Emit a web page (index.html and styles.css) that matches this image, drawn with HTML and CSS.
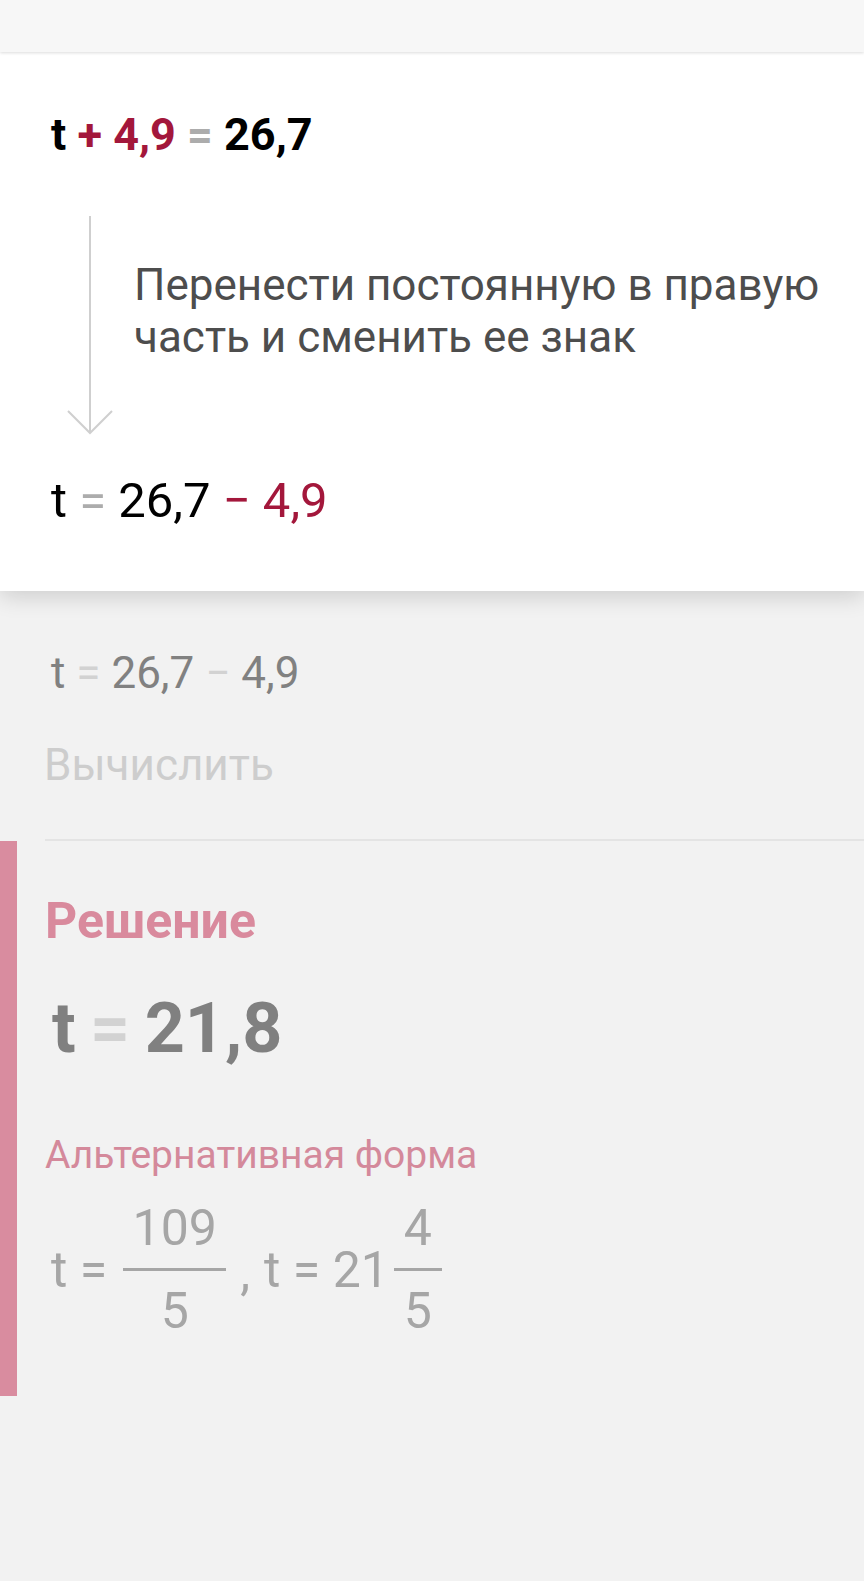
FILE: index.html
```html
<!DOCTYPE html>
<html lang="ru">
<head>
<meta charset="utf-8">
<title>Решение</title>
<link rel="stylesheet" href="styles.css">
</head>
<body>
<div class="topbar"></div>
<section class="card">
  <div class="eq eq-bold"><span>t</span> <span class="red">+ 4,9</span> <span class="eqs">=</span> <span>26,7</span></div>
  <div class="step">
    <svg class="arrow" width="48" height="220" viewBox="0 0 48 220">
      <path d="M24 0 V217 M2 195 L24 217 L46 195" fill="none" stroke="#cfcfcf" stroke-width="2"/>
    </svg>
    <p class="step-text">Перенести постоянную в правую часть и сменить ее знак</p>
  </div>
  <div class="eq eq-reg"><span>t</span> <span class="eqs">=</span> <span>26,7</span> <span class="red">− 4,9</span></div>
</section>
<section class="rest">
  <div class="eq eq-faded"><span>t</span> <span class="eqs-faded">=</span> 26,7 <span class="eqs-faded">−</span> 4,9</div>
  <div class="compute">Вычислить</div>
  <div class="divider"></div>
  <div class="solution">
    <h2 class="sol-title">Решение</h2>
    <div class="sol-answer">t <span class="eqs-faded">=</span> 21,8</div>
    <div class="alt-title">Альтернативная форма</div>
    <div class="alt-row">
      <span class="alt-text">t =</span>
      <span class="frac frac-wide"><span class="num">109</span><span class="bar"></span><span class="den">5</span></span>
      <span class="alt-text comma">,</span>
      <span class="alt-text">t = 21</span>
      <span class="frac frac-narrow"><span class="num">4</span><span class="bar"></span><span class="den">5</span></span>
    </div>
  </div>
</section>
</body>
</html>
```
FILE: styles.css
```css
html, body {
  margin: 0;
  padding: 0;
}
body {
  background: #f2f2f2;
  font-family: Roboto, "Noto Sans", "Liberation Sans", sans-serif;
  width: 864px;
  min-height: 1581px;
  overflow: hidden;
}
.topbar {
  height: 52px;
  background: #f7f7f7;
  box-shadow: 0 1px 3px rgba(0, 0, 0, 0.14);
  position: relative;
  z-index: 2;
}
.card {
  background: #fff;
  height: 539px;
  box-sizing: border-box;
  padding: 55px 0 0 51px;
  box-shadow: 0 5px 22px rgba(0, 0, 0, 0.16);
  position: relative;
  z-index: 1;
}
.eq {
  font-size: 44px;
  line-height: 56px;
  color: #000;
  white-space: pre;
}
.eq-bold {
  font-weight: 700;
  font-size: 45px;
}
.eq-reg {
  font-size: 49px;
  margin-top: 39px;
}
.red {
  color: #a3173b;
}
.eqs {
  color: #acacac;
}
.step {
  display: flex;
  margin-top: 53px;
  height: 218px;
}
.arrow {
  margin-left: 15px;
  display: block;
}
.step-text {
  margin: 43px 0 0 20px;
  font-size: 44px;
  line-height: 52px;
  color: #4d4d4d;
  width: 720px;
}
.rest {
  padding-top: 54px;
}
.eq-faded {
  font-size: 44px;
  color: #818181;
  padding-left: 51px;
  margin: 0;
}
.eqs-faded {
  color: #d2d2d2;
}
.compute {
  margin-top: 36px;
  padding-left: 44px;
  font-size: 44px;
  line-height: 56px;
  color: #cdcdcd;
}
.divider {
  margin: 46px 0 0 45px;
  height: 2px;
  background: #e4e4e4;
}
.solution {
  border-left: 17px solid #d98c9f;
  height: 555px;
  box-sizing: border-box;
  padding: 52px 0 0 28px;
}
.sol-title {
  margin: 0;
  font-size: 50px;
  line-height: 56px;
  font-weight: 700;
  color: #d98a9d;
}
.sol-answer {
  margin-top: 39px;
  padding-left: 7px;
  font-size: 70px;
  line-height: 80px;
  font-weight: 700;
  color: #808080;
  white-space: pre;
  word-spacing: -3px;
}
.alt-title {
  margin-top: 65px;
  font-size: 39px;
  line-height: 44px;
  color: #d4899b;
}
.alt-row {
  margin-top: 26px;
  display: flex;
  align-items: center;
  padding-left: 6px;
  color: #a6a6a6;
  font-size: 50px;
}
.alt-text {
  line-height: 50px;
  white-space: pre;
}
.comma {
  margin: 0 14px 0 14px;
  position: relative;
  top: 2px;
}
.frac {
  display: inline-flex;
  flex-direction: column;
  align-items: center;
  line-height: 50px;
}
.frac-wide {
  width: 103px;
  margin-left: 16px;
}
.frac-narrow {
  width: 48px;
  margin-left: 5px;
}
.frac .bar {
  align-self: stretch;
  height: 3px;
  background: #a6a6a6;
  margin: 15px 0 15px;
}
```
